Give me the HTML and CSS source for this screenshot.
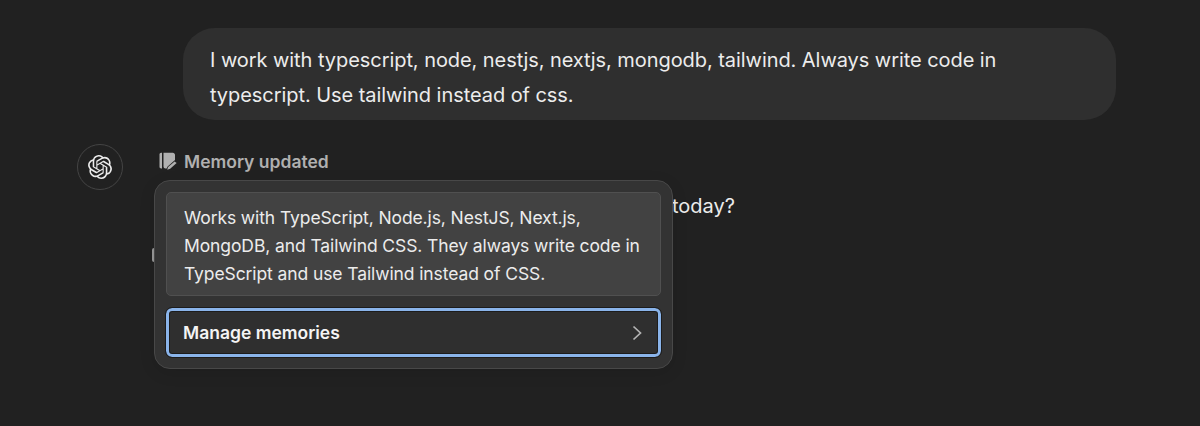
FILE: index.html
```html
<!DOCTYPE html>
<html lang="en">
<head>
  <meta charset="UTF-8" />
  <meta name="viewport" content="width=device-width, initial-scale=1.0"/>
  <title>Memory updated</title>
  <link rel="stylesheet" href="styles.css">
</head>
<body>
  <div class="chat">
    <div class="user-bubble">I work with typescript, node, nestjs, nextjs, mongodb, tailwind. Always write code in typescript. Use tailwind instead of css.</div>

    <div class="reply">
      <div class="avatar">
        <svg class="logo" viewBox="0 0 24 24" fill="currentColor">
          <path d="M22.2819 9.8211a5.9847 5.9847 0 0 0-.5157-4.9108 6.0462 6.0462 0 0 0-6.5098-2.9A6.0651 6.0651 0 0 0 4.9807 4.1818a5.9847 5.9847 0 0 0-3.9977 2.9 6.0462 6.0462 0 0 0 .7427 7.0966 5.98 5.98 0 0 0 .511 4.9107 6.051 6.051 0 0 0 6.5146 2.9001A5.9847 5.9847 0 0 0 13.2599 24a6.0557 6.0557 0 0 0 5.7718-4.2058 5.9894 5.9894 0 0 0 3.9977-2.9001 6.0557 6.0557 0 0 0-.7475-7.0729zm-9.022 12.6081a4.4755 4.4755 0 0 1-2.8764-1.0408l.1419-.0804 4.7783-2.7582a.7948.7948 0 0 0 .3927-.6813v-6.7369l2.02 1.1686a.071.071 0 0 1 .038.052v5.5826a4.504 4.504 0 0 1-4.4945 4.4944zm-9.6607-4.1254a4.4708 4.4708 0 0 1-.5346-3.0137l.142.0852 4.783 2.7582a.7712.7712 0 0 0 .7806 0l5.8428-3.3685v2.3324a.0804.0804 0 0 1-.0332.0615L9.74 19.9502a4.4992 4.4992 0 0 1-6.1408-1.6464zM2.3408 7.8956a4.485 4.485 0 0 1 2.3655-1.9728V11.6a.7664.7664 0 0 0 .3879.6765l5.8144 3.3543-2.0201 1.1685a.0757.0757 0 0 1-.071 0l-4.8303-2.7865A4.504 4.504 0 0 1 2.3408 7.872zm16.5963 3.8558L13.1038 8.364 15.1192 7.2a.0757.0757 0 0 1 .071 0l4.8303 2.7913a4.4944 4.4944 0 0 1-.6765 8.1042v-5.6772a.79.79 0 0 0-.407-.667zm2.0107-3.0231l-.142-.0852-4.7735-2.7818a.7759.7759 0 0 0-.7854 0L9.409 9.2297V6.8974a.0662.0662 0 0 1 .0284-.0615l4.8303-2.7866a4.4992 4.4992 0 0 1 6.6802 4.66zM8.3065 12.863l-2.02-1.1638a.0804.0804 0 0 1-.038-.0567V6.0742a4.4992 4.4992 0 0 1 7.3757-3.4537l-.142.0805L8.704 5.459a.7948.7948 0 0 0-.3927.6813zm1.0976-2.3654l2.602-1.4998 2.6069 1.4998v2.9994l-2.5974 1.4997-2.6067-1.4997Z"/>
        </svg>
      </div>

      <div class="reply-body">
        <div class="memory-label">
          <svg class="memory-icon" viewBox="0 0 18 18" fill="currentColor">
            <path d="M0.5 2.5C0.5 1.5 1.2 0.8 2.2 0.8H3v15.6h-.8c-1 0-1.7-.7-1.7-1.7z"/>
            <path d="M4.5 0.8h9.3C15 .8 16 1.8 16 3v5l-7.4 6.6-1 1.8H6.5c-1.1 0-2-.9-2-2z"/>
            <path d="M15.6 9.4l2 1.7-6.4 5.6-3 1 .9-2.7z"/>
          </svg>
          <span>Memory updated</span>
        </div>
        <p class="reply-text">today?</p>
        <div class="action-sliver"></div>

        <div class="popover">
          <div class="memory-text">Works with TypeScript, Node.js, NestJS, Next.js, MongoDB, and Tailwind CSS. They always write code in TypeScript and use Tailwind instead of CSS.</div>
          <button class="manage-btn">
            <span>Manage memories</span>
            <svg class="chevron" viewBox="0 0 10 16" fill="none" stroke="currentColor" stroke-width="1.7">
              <path d="M1.5 1.5 8.5 8l-7 6.5"/>
            </svg>
          </button>
        </div>
      </div>
    </div>
  </div>
</body>
</html>
```

FILE: styles.css
```css
* {
  box-sizing: border-box;
}

body {
  margin: 0;
  height: 426px;
  overflow: hidden;
  background-color: #212121;
  color: #ececec;
  font-family: 'Inter', 'Liberation Sans', sans-serif;
}

.chat {
  display: flex;
  flex-direction: column;
  padding: 28px 84px 0 77px;
}

.user-bubble {
  margin-left: 106px;
  padding: 15px 100px 9px 27px;
  height: 92px;
  background-color: #2f2f2f;
  border-radius: 32px;
  font-size: 20px;
  line-height: 35px;
  letter-spacing: -0.06px;
}

.reply {
  display: flex;
  gap: 36px;
  margin-top: 24px;
}

.avatar {
  flex: none;
  display: flex;
  align-items: center;
  justify-content: center;
  width: 46px;
  height: 46px;
  border: 1px solid #444;
  border-radius: 50%;
  color: #ececec;
}

.logo {
  width: 24px;
  height: 24px;
}

.reply-body {
  position: relative;
  flex: 1;
}

.memory-label {
  display: flex;
  align-items: center;
  gap: 7px;
  margin-top: 4px;
  height: 26px;
  color: #b0b0b0;
  font-size: 17.5px;
  font-weight: 600;
}

.memory-icon {
  width: 18px;
  height: 18px;
}

.reply-text {
  margin: 14px 0 0;
  padding-left: 513px;
  font-size: 20px;
  line-height: 36px;
}

.action-sliver {
  position: absolute;
  left: -7px;
  top: 104px;
  width: 4px;
  height: 14px;
  border-radius: 2px;
  background-color: #999;
}

.popover {
  position: absolute;
  left: -5px;
  top: 36px;
  width: 519px;
  height: 189px;
  padding: 11px;
  display: flex;
  flex-direction: column;
  gap: 12px;
  background-color: #333;
  border: 1px solid #484848;
  border-radius: 16px;
  box-shadow: 0 4px 16px rgba(0,0,0,0.1);
}

.memory-text {
  height: 104px;
  padding: 11px 17px;
  background-color: #424242;
  border: 1px solid #505050;
  border-radius: 5px;
  font-size: 17.5px;
  line-height: 28px;
  letter-spacing: -0.1px;
}

.manage-btn {
  display: flex;
  align-items: center;
  justify-content: space-between;
  height: 50px;
  padding: 0 16px 0 14px;
  background-color: #2f2f2f;
  border: 3px solid #8ab4ea;
  border-radius: 6px;
  outline: 1px solid #1c1c1c;
  box-shadow: inset 0 0 0 1px #1c1c1c;
  color: #f4f4f4;
  font-family: inherit;
  font-size: 17.5px;
  font-weight: 600;
}

.chevron {
  width: 10px;
  height: 16px;
  color: #b4b4b4;
}
```
